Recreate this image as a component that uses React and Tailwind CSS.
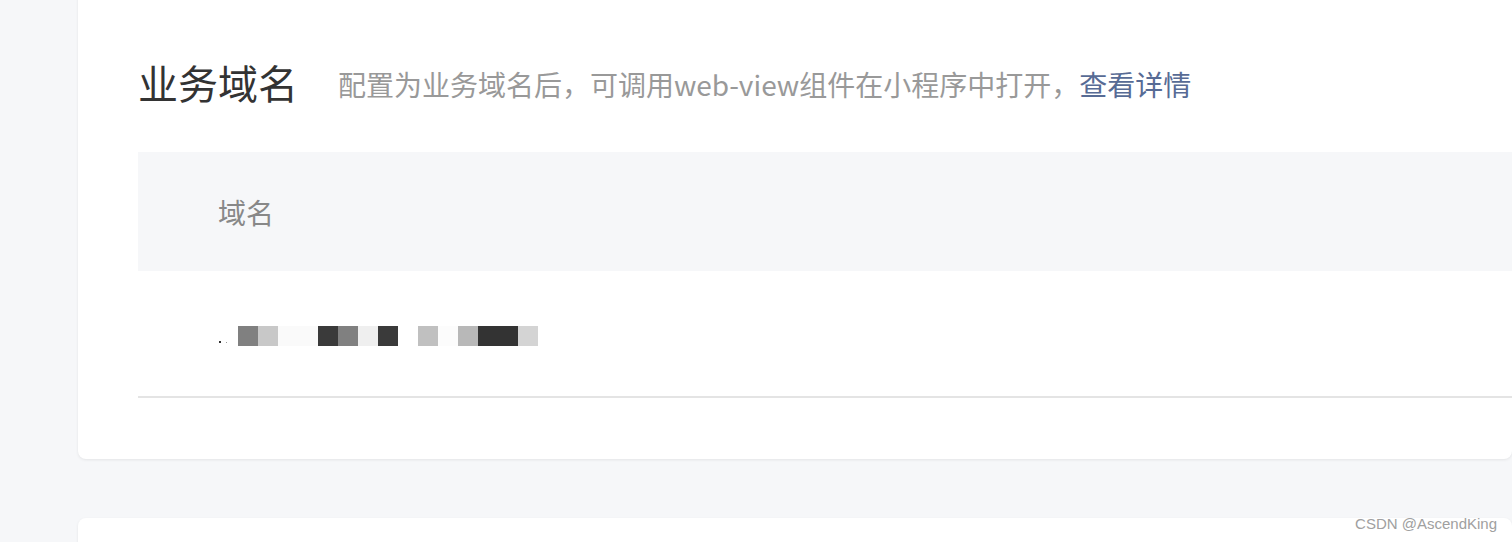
export default function App() {
  const blocks = [
    "#808080", "#c8c8c8", "#fafafa", "#fafafa", "#3a3a3a", "#808080", "#efefef", "#3a3a3a",
    "#ffffff", "#c0c0c0", "#fcfcfc", "#b8b8b8", "#333333", "#333333", "#d4d4d4",
  ];
  return (
    <div
      className="w-full h-[542px] overflow-hidden bg-[#f6f7f9] pl-[78px] relative"
      style={{ fontFamily: '"Noto Sans CJK SC", "Noto Sans", sans-serif' }}
    >
      <div className="-mt-[20px] h-[479px] bg-white rounded-lg shadow-[0_1px_3px_rgba(0,0,0,0.08)] pl-[60px] pt-[74px]">
        <div className="flex items-center h-[56px] gap-[40px]">
          <span className="text-[40px] leading-none text-[#333]">业务域名</span>
          <span className="text-[28px] leading-none text-[#999] mt-[4px]">
            配置为业务域名后，可调用web-view组件在小程序中打开，
            <span className="text-[#576b95]">查看详情</span>
          </span>
        </div>
        <div className="mt-[42px] h-[119px] bg-[#f6f7f9] pl-[80px] flex items-center">
          <span className="text-[28px] leading-none text-[#888]">域名</span>
        </div>
        <div className="h-[127px] border-b-2 border-[#e4e4e4] pl-[80px] flex items-center pt-[5px]">
          <div className="flex items-end h-[20px]">
            <span className="w-[2px] h-[2px] bg-[#333] mb-[3px] ml-[1px]"></span>
            <span className="w-[1px] h-[1px] bg-[#999] mb-[3px] ml-[5px] mr-[11px]"></span>
            {blocks.map((c, i) => (
              <span key={i} className="w-[20px] h-[20px]" style={{ backgroundColor: c }}></span>
            ))}
          </div>
        </div>
      </div>
      <div className="mt-[59px] h-[60px] bg-white rounded-lg shadow-[0_1px_3px_rgba(0,0,0,0.08)]"></div>
      <div
        className="absolute right-[15px] top-[516px] text-[15px] leading-none text-[#a0a0a0]"
        style={{ fontFamily: '"Liberation Sans", Arial, sans-serif' }}
      >
        CSDN @AscendKing
      </div>
    </div>
  );
}
